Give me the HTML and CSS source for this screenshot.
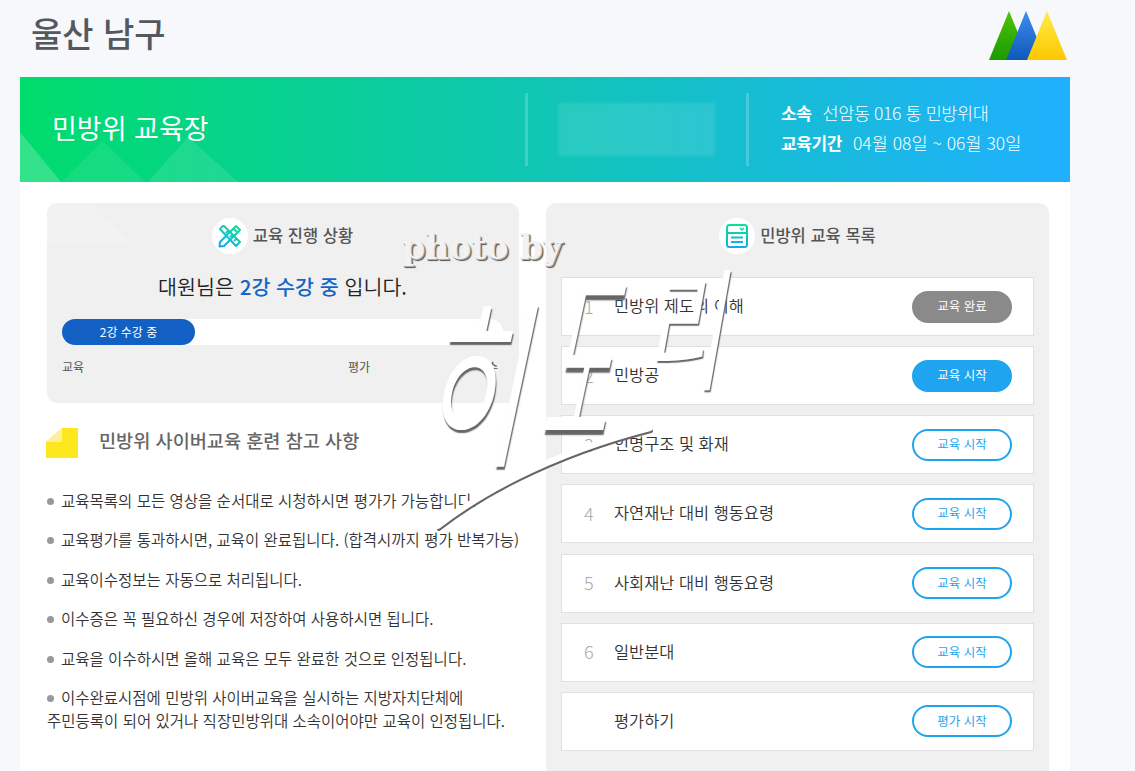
FILE: index.html
```html
<!DOCTYPE html>
<html lang="ko">

<head>
    <meta charset="UTF-8">
    <meta name="viewport" content="width=device-width, initial-scale=1.0">
    <title>민방위 교육장</title>
    <link rel="stylesheet" href="styles.css">
</head>

<body>
    <!--상단-->
    <header class="top">
        <h1 class="city">울산 남구</h1>
        <svg class="logo" width="78" height="50" viewBox="0 0 78 50">
            <defs>
                <linearGradient id="lg1" x1="0" y1="0" x2="0" y2="1">
                    <stop offset="0" stop-color="#4fc40a" />
                    <stop offset="1" stop-color="#1b9a00" />
                </linearGradient>
                <linearGradient id="lg2" x1="0" y1="0" x2="0" y2="1">
                    <stop offset="0" stop-color="#3f8df0" />
                    <stop offset="1" stop-color="#0f58b8" />
                </linearGradient>
                <linearGradient id="lg3" x1="0" y1="0" x2="0" y2="1">
                    <stop offset="0" stop-color="#ffec4a" />
                    <stop offset="1" stop-color="#fcc800" />
                </linearGradient>
            </defs>
            <polygon points="20,1 0,50 40,50" fill="url(#lg1)" />
            <polygon points="37,1 17,50 57,50" fill="url(#lg2)" />
            <polygon points="58,1 38,50 78,50" fill="url(#lg3)" />
        </svg>
    </header>

    <div class="wrap">
        <!--배너-->
        <section class="banner">
            <svg class="banner-bg" width="240" height="50" viewBox="0 0 240 50">
                <polygon points="0,0 41,50 0,50" fill="#fff" opacity=".2" />
                <polygon points="83,9 41,50 125,50" fill="#fff" opacity=".08" />
                <polygon points="168,5 128,50 218,50" fill="#fff" opacity=".1" />
            </svg>
            <h2 class="banner-title">민방위 교육장</h2>
            <div class="banner-mid">
                <div class="blur-box"></div>
            </div>
            <div class="banner-info">
                <p><b>소속</b>선암동 016 통 민방위대</p>
                <p class="period"><b>교육기간</b>04월 08일 ~ 06월 30일</p>
            </div>
        </section>

        <main class="content">
            <div class="left">
                <section class="panel progress">
                    <svg class="panel-bg" width="110" height="40" viewBox="0 0 110 40">
                        <polygon points="0,0 40,0 85,40 0,40" fill="#fff" opacity=".18" />
                    </svg>
                    <div class="panel-head">
                        <span class="round">
                            <svg width="24" height="24" viewBox="0 0 24 24" fill="none" stroke="url(#ic1)" stroke-width="2" stroke-linejoin="round">
                                <defs>
                                    <linearGradient id="ic1" gradientUnits="userSpaceOnUse" x1="20" y1="1" x2="4" y2="23">
                                        <stop offset="0" stop-color="#0be38f" />
                                        <stop offset="1" stop-color="#12a8f5" />
                                    </linearGradient>
                                </defs>
                                <path d="M4 2.5 L2 5 L18 22 L22 18 L6 2 Z M8 9 l2 -2 M12 13 l2 -2 M16 17 l2 -2" />
                                <path d="M18 2 L22 6 L6 22 L1.5 22.5 L2 18 Z M15.500 4.500 l4 4" />
                            </svg>
                        </span>
                        <h3>교육 진행 상황</h3>
                    </div>
                    <p class="lead">대원님은 <em>2강 수강 중</em> 입니다.</p>
                    <div class="track">
                        <div class="fill" style="width: 133px">2강 수강 중</div>
                    </div>
                    <div class="steps">
                        <span class="s1">교육</span>
                        <span class="s2">평가</span>
                        <span class="s3">이수</span>
                    </div>
                </section>

                <div class="note-head">
                    <svg width="32" height="30" viewBox="0 0 32 30">
                        <polygon points="16,0 32,0 32,30 0,30 0,14" fill="#fce81c" />
                        <polygon points="16,0 16,14 0,14" fill="#fdf09a" />
                    </svg>
                    <h3>민방위 사이버교육 훈련 참고 사항</h3>
                </div>

                <ul class="notes">
                    <li>교육목록의 모든 영상을 순서대로 시청하시면 평가가 가능합니다.</li>
                    <li>교육평가를 통과하시면, 교육이 완료됩니다. (합격시까지 평가 반복가능)</li>
                    <li>교육이수정보는 자동으로 처리됩니다.</li>
                    <li>이수증은 꼭 필요하신 경우에 저장하여 사용하시면 됩니다.</li>
                    <li>교육을 이수하시면 올해 교육은 모두 완료한 것으로 인정됩니다.</li>
                    <li class="wide">이수완료시점에 민방위 사이버교육을 실시하는 지방자치단체에<br>주민등록이 되어 있거나 직장민방위대 소속이어야만 교육이 인정됩니다.</li>
                </ul>
            </div>

            <section class="panel list">
                <div class="panel-head">
                    <span class="round">
                        <svg width="24" height="26" viewBox="0 0 24 26" fill="none" stroke="url(#ic2)" stroke-width="2">
                            <defs>
                                <linearGradient id="ic2" gradientUnits="userSpaceOnUse" x1="12" y1="1" x2="12" y2="25">
                                    <stop offset="0" stop-color="#0be38f" />
                                    <stop offset="1" stop-color="#12a8f5" />
                                </linearGradient>
                            </defs>
                            <rect x="2" y="2" width="20" height="22" rx="2.500" />
                            <path d="M2 10 H22 M6 14.500 H18 M6 19 H18" />
                            <path d="M15 5 L17 7 L19 5" stroke-width="1.500" />
                        </svg>
                    </span>
                    <h3>민방위 교육 목록</h3>
                </div>

                <ol class="rows">
                    <li class="row"><span class="num">1</span><span class="name">민방위 제도의 이해</span><button class="btn done">교육 완료</button></li>
                    <li class="row"><span class="num">2</span><span class="name">민방공</span><button class="btn now">교육 시작</button></li>
                    <li class="row"><span class="num">3</span><span class="name">인명구조 및 화재</span><button class="btn">교육 시작</button></li>
                    <li class="row"><span class="num">4</span><span class="name">자연재난 대비 행동요령</span><button class="btn">교육 시작</button></li>
                    <li class="row"><span class="num">5</span><span class="name">사회재난 대비 행동요령</span><button class="btn">교육 시작</button></li>
                    <li class="row"><span class="num">6</span><span class="name">일반분대</span><button class="btn">교육 시작</button></li>
                    <li class="row"><span class="num"></span><span class="name">평가하기</span><button class="btn">평가 시작</button></li>
                </ol>
            </section>
        </main>
    </div>

    <!--워터마크-->
    <div class="mark">
        <span class="photo">photo by</span>
        <span class="sign sign1">히</span>
        <span class="sign sign2">도</span>
        <span class="sign sign3">리</span>
        <svg class="swoosh" width="220" height="108" viewBox="0 0 220 108" fill="none" stroke-linecap="round">
            <path d="M3 101 C40 72 110 30 215 3" stroke="#666" stroke-width="4" transform="translate(1 3)" />
            <path d="M3 101 C40 72 110 30 215 3" stroke="#fff" stroke-width="6" />
        </svg>
    </div>
</body>

</html>
```

FILE: styles.css
```css
* {
    box-sizing: border-box;
}

html,
body {
    height: 771px;
    overflow: hidden;
}

body {
    margin: 0;
    background: #f6f8fb;
    font-family: "Noto Sans CJK KR", "Noto Sans", sans-serif;
    color: #333;
    position: relative;
}

h1,
h2,
h3,
p,
ul,
ol {
    margin: 0;
    padding: 0;
    list-style: none;
}

.top {
    height: 77px;
    width: 1067px;
    padding: 10px 0 0 31px;
    display: flex;
    justify-content: space-between;
    align-items: flex-start;
}

.city {
    font-size: 34px;
    line-height: 45px;
    font-weight: 500;
    color: #55585c;
}

.wrap {
    width: 1050px;
    margin-left: 20px;
    background: #fff;
}

/*배너*/
.banner {
    height: 105px;
    background: linear-gradient(90deg, #00dc6c 0%, #20b0ff 100%);
    display: flex;
    align-items: center;
    color: #fff;
    position: relative;
}

.banner-bg {
    position: absolute;
    left: 0;
    bottom: 0;
}

.banner-title {
    width: 505px;
    padding: 0 0 4px 32px;
    font-size: 27px;
    font-weight: 400;
    position: relative;
}

.banner-mid {
    width: 224px;
    height: 73px;
    border-left: 3px solid rgba(255, 255, 255, .2);
    border-right: 3px solid rgba(255, 255, 255, .2);
    display: flex;
    align-items: center;
    padding-left: 30px;
}

.blur-box {
    width: 157px;
    height: 53px;
    background: rgba(255, 255, 255, .1);
    filter: blur(1.500px);
}

.banner-info {
    padding: 0 0 3px 32px;
    font-size: 17.500px;
    line-height: 30px;
    font-weight: 300;
    letter-spacing: -.4px;
}

.banner-info b {
    font-weight: 700;
    font-size: 17px;
    letter-spacing: -.4px;
    margin-right: 11px;
}

.banner-info .period {
    letter-spacing: 0;
}

/*본문*/
.content {
    padding: 21px 21px 0 27px;
    display: grid;
    grid-template-columns: 472px 503px;
    gap: 27px;
    align-items: start;
}

.panel {
    background: #f0f0f0;
    border-radius: 10px;
    padding-top: 15px;
    position: relative;
}

.panel-bg {
    position: absolute;
    left: 0;
    top: 0;
}

.panel-head {
    display: flex;
    justify-content: center;
    align-items: center;
    gap: 5px;
    position: relative;
}

.panel-head h3 {
    font-size: 16.500px;
    font-weight: 500;
    color: #555;
    margin-bottom: 3px;
}

.round {
    width: 36px;
    height: 36px;
    border-radius: 50%;
    background: #fff;
    display: flex;
    justify-content: center;
    align-items: center;
}

.progress {
    height: 200px;
    padding-left: 15px;
    padding-right: 16px;
}

.lead {
    margin-top: 16px;
    text-align: center;
    font-size: 20.600px;
    line-height: 32px;
    font-weight: 350;
    color: #222;
}

.lead em {
    font-style: normal;
    font-weight: 500;
    color: #1565c8;
}

.track {
    margin-top: 17px;
    height: 26px;
    border-radius: 13px;
    background: #fff;
}

.fill {
    height: 26px;
    border-radius: 13px;
    background: #1260c4;
    color: #fff;
    font-size: 12px;
    line-height: 25px;
    text-align: center;
}

.steps {
    margin-top: 13px;
    display: flex;
    font-size: 12px;
    line-height: 18px;
    color: #555;
}

.s1 {
    width: 286px;
}

.s2 {
    width: 128px;
}

.note-head {
    height: 30px;
    margin-top: 25px;
    margin-left: -1px;
    display: flex;
    align-items: center;
    gap: 21px;
}

.note-head h3 {
    font-size: 18.600px;
    font-weight: 500;
    color: #666;
    line-height: 26px;
    margin-bottom: 6px;
}

.notes {
    margin-top: 31px;
    font-size: 15.500px;
    line-height: 23px;
    font-weight: 350;
    color: #333;
    white-space: nowrap;
}

.notes li {
    position: relative;
    padding-left: 14px;
    margin-bottom: 16.400px;
}

.notes li::before {
    content: "";
    position: absolute;
    left: 0;
    top: 9px;
    width: 7px;
    height: 7px;
    border-radius: 50%;
    background: #999;
}

.notes .wide {
    padding-left: 0;
    text-indent: 14px;
}

.list {
    height: 568px;
    padding-left: 15px;
    padding-right: 15px;
    border-radius: 10px 10px 0 0;
}

.rows {
    margin-top: 23px;
    display: flex;
    flex-direction: column;
    gap: 10.170px;
}

.row {
    height: 59px;
    background: #fff;
    border: 1px solid #e0e0e0;
    display: flex;
    align-items: center;
    padding: 0 21px 0 22px;
}

.num {
    width: 30px;
    font-size: 18px;
    font-weight: 300;
    color: #aaa;
    margin-bottom: 2px;
}

.name {
    flex: 1;
    font-size: 16.400px;
    font-weight: 350;
    color: #333;
    margin-bottom: 3px;
}

.btn {
    width: 100px;
    height: 32px;
    border-radius: 16px;
    border: 2px solid #1fa4ef;
    background: #fff;
    color: #1fa4ef;
    font-family: inherit;
    font-size: 12.500px;
    padding: 0 0 2px;
}

.btn.done {
    background: #8a8a8a;
    border-color: #8a8a8a;
    color: #fff;
}

.btn.now {
    background: #1fa4ef;
    color: #fff;
}

/*워터마크*/
.mark span,
.mark svg {
    position: absolute;
}

.photo {
    left: 402px;
    top: 228px;
    font-family: "DejaVu Serif", serif;
    font-size: 33px;
    line-height: 40px;
    font-weight: 700;
    white-space: nowrap;
    color: #f2f2f2;
    text-shadow: 1px 1px 0 #aaa, 2px 2px 1px #555;
}

.sign {
    font-weight: 350;
    color: #fff;
    line-height: 1;
    text-shadow: 1.500px 2px 1px #666;
    transform-origin: 0 0;
}

.sign1 {
    left: 453px;
    top: 285px;
    font-size: 120px;
    transform: skewX(-12deg) scale(.95, 1.5);
}

.sign2 {
    left: 580px;
    top: 245px;
    font-size: 90px;
    transform: skewX(-12deg) scale(.8, 2.3);
}

.sign3 {
    left: 666px;
    top: 255px;
    font-size: 95px;
    transform: skewX(-10deg) scale(.9, 1.4);
}

.swoosh {
    left: 435px;
    top: 425px;
}
```
